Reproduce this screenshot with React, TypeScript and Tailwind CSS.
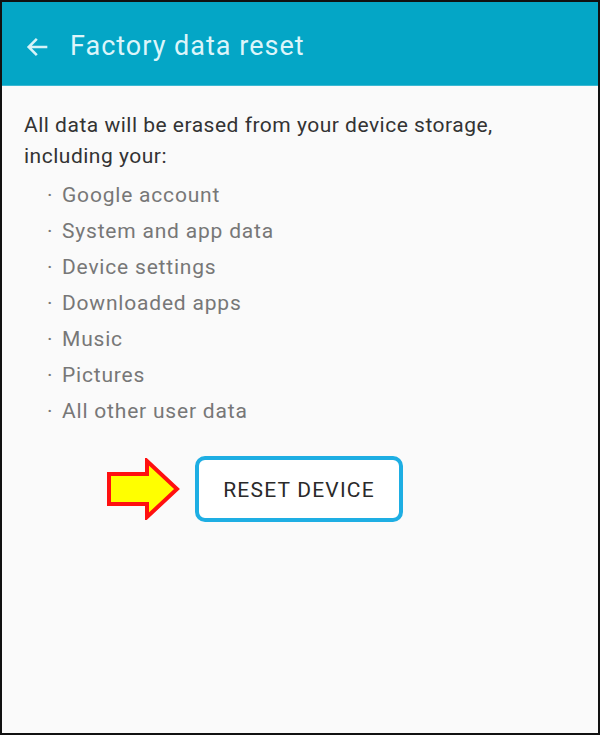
const items = [
  'Google account',
  'System and app data',
  'Device settings',
  'Downloaded apps',
  'Music',
  'Pictures',
  'All other user data',
]

export default function App() {
  return (
    <div className="w-[600px] h-[735px] border-2 border-[#111] bg-[#fafafa] flex flex-col font-['Roboto',sans-serif]">
      <div className="h-[84px] bg-[#04a6c6] flex items-center pl-[22px] pt-[6px] shrink-0 border-b border-[#3cb8d2]">
        <svg width="28" height="28" viewBox="0 0 24 24">
          <path d="M20 12H5M11 5l-7 7 7 7" fill="none" stroke="#d6f3f8" strokeWidth="2.2" />
        </svg>
        <div className="ml-[18px] text-[27px] tracking-[1px] text-[#dcf5fa]">Factory data reset</div>
      </div>
      <div className="pl-[22px] pt-[24px] text-[21px] tracking-[0.5px] leading-[31px] text-[#333]">
        All data will be erased from your device storage,
        <br />
        including your:
      </div>
      <div className="flex flex-col pl-[45px] pt-[5px] text-[21px] tracking-[0.8px] leading-[36px] text-[#777]">
        {items.map((t) => (
          <div key={t} className="flex">
            <span className="w-[15px]">·</span>
            <span>{t}</span>
          </div>
        ))}
      </div>
      <div className="flex items-center mt-[27px] pl-[105px]">
        <svg width="74" height="62" viewBox="0 0 74 62">
          <path d="M2 16H40V3L70 31L40 59V46H2Z" fill="#ffff00" stroke="#ff1010" strokeWidth="4" strokeLinejoin="miter" />
        </svg>
        <div className="ml-[14px] w-[208px] h-[66px] border-4 border-[#1eaee3] rounded-[10px] bg-white flex items-center justify-center pt-[3px] text-[21px] tracking-[1.2px] text-[#2a2a2a]">
          RESET DEVICE
        </div>
      </div>
    </div>
  )
}
